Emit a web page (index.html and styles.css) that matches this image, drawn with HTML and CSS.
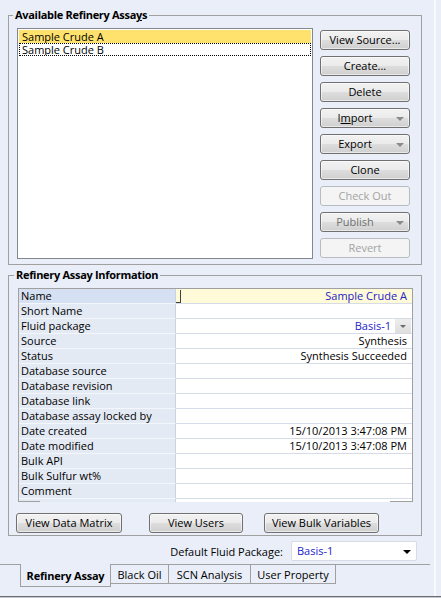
FILE: index.html
```html
<!DOCTYPE html>
<html>
<head>
<meta charset="utf-8">
<title>Refinery Assay</title>
<link rel="stylesheet" href="styles.css">
</head>
<body>
<div class="app">
  <div class="top">
    <div class="main">
      <fieldset class="group group-assays">
        <legend>Available Refinery Assa<u>y</u>s</legend>
        <div class="assay-body">
          <div class="listbox">
            <div class="item selected"><span class="item-text">Sample Crude A</span></div>
            <div class="item focused"><span class="item-text">Sample Crude B</span></div>
          </div>
          <div class="btn-col">
            <button class="btn">View Source...</button>
            <button class="btn">Create...</button>
            <button class="btn">Delete</button>
            <button class="btn btn-drop">I<u>m</u>port<span class="drop-arrow"></span></button>
            <button class="btn btn-drop">Export<span class="drop-arrow"></span></button>
            <button class="btn">Clone</button>
            <button class="btn disabled">Check Out</button>
            <button class="btn btn-drop dim">Publish<span class="drop-arrow"></span></button>
            <button class="btn disabled">Revert</button>
          </div>
        </div>
      </fieldset>

      <fieldset class="group group-info">
        <legend>Refinery Assay Information</legend>
        <div class="grid">
          <div class="lbl current">Name</div><div class="val name-val">Sample Crude A</div>
          <div class="lbl">Short Name</div><div class="val"></div>
          <div class="lbl">Fluid package</div><div class="val fluid-val"><span class="blue">Basis-1</span><span class="cell-drop"></span></div>
          <div class="lbl">Source</div><div class="val">Synthesis</div>
          <div class="lbl">Status</div><div class="val">Synthesis Succeeded</div>
          <div class="lbl">Database source</div><div class="val"></div>
          <div class="lbl">Database revision</div><div class="val"></div>
          <div class="lbl">Database link</div><div class="val"></div>
          <div class="lbl">Database assay locked by</div><div class="val"></div>
          <div class="lbl">Date created</div><div class="val">15/10/2013 3:47:08 PM</div>
          <div class="lbl">Date modified</div><div class="val">15/10/2013 3:47:08 PM</div>
          <div class="lbl">Bulk API</div><div class="val"></div>
          <div class="lbl">Bulk Sulfur wt%</div><div class="val"></div>
          <div class="lbl">Comment</div><div class="val"></div>
        </div>
        <div class="info-buttons">
          <button class="btn btn-matrix">View Data Matrix</button>
          <button class="btn btn-users">View Users</button>
          <button class="btn btn-bulk">View Bulk Variables</button>
        </div>
      </fieldset>

      <div class="default-row">
        <span class="default-label">Default Fluid Package:</span>
        <div class="combo"><span class="combo-text">Basis-1</span><span class="combo-arrow"></span></div>
      </div>

      <div class="tabs">
        <div class="tab-lead"></div>
        <div class="tab active">Refinery Assay</div>
        <div class="tab tab-black">Black Oil</div>
        <div class="tab tab-scn">SCN Analysis</div>
        <div class="tab tab-user">User Property</div>
        <div class="tab-fill"></div>
      </div>
    </div>
    <div class="splitter"></div>
  </div>
  <div class="bottom-line"></div>
  <div class="bottom-rest"></div>
</div>
</body>
</html>
```

FILE: styles.css
```css
* { box-sizing: border-box; }
html, body { margin: 0; padding: 0; }
body {
  width: 441px;
  height: 598px;
  overflow: hidden;
  background: #e9eef8;
  font-family: "Open Sans", "Noto Sans", sans-serif;
  font-size: 11px;
  color: #000;
}
.app { display: flex; flex-direction: column; height: 598px; }
.top { display: flex; height: 596px; }
.main { width: 434px; display: flex; flex-direction: column; }
.splitter { width: 2px; background: #f8fafd; }
.bottom-line { height: 1px; background: #6e6e6e; }
.bottom-rest { height: 1px; background: #c3c9d3; }

/* group boxes */
.group {
  margin: 0 0 0 8px;
  width: 414px;
  min-width: 0;
  border: 1px solid #a0a0a0;
}
.group legend {
  font-weight: bold;
  line-height: 14px;
  height: 14px;
  padding: 0 2px;
  margin-left: -4px;
  letter-spacing: -0.3px;
  color: #000;
}
.group-assays { margin-top: 8px; padding: 6px 11px 5px 8px; }
.assay-body { display: flex; gap: 7px; }

.listbox {
  width: 296px;
  height: 231px;
  background: #fff;
  border: 1px solid #828790;
  padding: 1px;
}
.item { height: 13px; padding-left: 3px; white-space: nowrap; overflow: hidden; }
.item-text { display: block; font-size: 11px; line-height: 13px; height: 13px; }
.item.selected { background: #ffe26e; }
.item.focused { border: 1px dotted #000; padding-left: 2px; }
.item.focused .item-text { line-height: 11px; height: 11px; }

.btn-col { display: flex; flex-direction: column; gap: 6px; margin-top: 2px; width: 90px; }

/* buttons */
.btn {
  position: relative;
  height: 20px;
  padding: 0;
  margin: 0;
  font-family: inherit;
  font-size: 11px;
  line-height: 18px;
  color: #000;
  border: 1px solid #707070;
  border-radius: 3px;
  background: linear-gradient(#f2f2f2 0%, #ebebeb 48%, #dddddd 52%, #cfcfcf 100%);
  box-shadow: inset 0 0 0 1px rgba(255,255,255,0.55);
  text-align: center;
  white-space: nowrap;
}
.btn-col .btn { width: 90px; }
.btn-drop { padding-right: 20px; }
.drop-arrow {
  position: absolute;
  right: 5px;
  top: 8px;
  width: 0;
  height: 0;
  border-left: 4px solid transparent;
  border-right: 4px solid transparent;
  border-top: 4px solid #8a8a8a;
}
.btn.dim { color: #6f6f6f; }
.btn.disabled {
  color: #a3a3a3;
  border-color: #b8bcc2;
  background: #f4f4f4;
  box-shadow: none;
}

/* info group */
.group-info { margin-top: 3px; padding: 6px 8px 2px 9px; }
.grid {
  position: relative;
  width: 395px;
  height: 214px;
  border: 1px solid #a0a0a0;
  border-bottom: none;
  display: grid;
  grid-template-columns: 157px 236px;
  grid-template-rows: repeat(14, 15px);
  align-content: start;
  background: linear-gradient(to right, #e4eaf4 156px, #c9d3e3 156px, #c9d3e3 157px, #fff 157px);
}
.grid::before, .grid::after {
  content: "";
  position: absolute;
  bottom: 0;
  height: 1px;
  background: #a0a0a0;
}
.grid::before { left: -1px; width: 22px; }
.grid::after { right: -1px; width: 23px; }
.lbl {
  height: 15px;
  line-height: 14px;
  padding-left: 2px;
  background: #e4eaf4;
  border-bottom: 1px solid #f3f6fa;
  border-right: 1px solid #c9d3e3;
  white-space: nowrap;
}
.lbl.current { background: #d5e1f3; }
.val {
  position: relative;
  height: 15px;
  line-height: 14px;
  padding-right: 5px;
  text-align: right;
  background: #fff;
  border-bottom: 1px solid #d5dce8;
  white-space: nowrap;
}
.name-val { background: #fffad8; color: #2323c8; }
.name-val::before {
  content: "";
  position: absolute;
  left: 0;
  top: 1px;
  width: 4px;
  height: 12px;
  border-right: 1px solid #404040;
  border-bottom: 1px solid #404040;
}
.fluid-val { padding-right: 21px; }
.blue { color: #2323c8; }
.cell-drop {
  position: absolute;
  right: 1px;
  top: 0;
  width: 16px;
  height: 14px;
  background: linear-gradient(#eeeeee, #dedede);
}
.cell-drop::after {
  content: "";
  position: absolute;
  left: 5px;
  top: 6px;
  border-left: 3px solid transparent;
  border-right: 3px solid transparent;
  border-top: 3px solid #6a6a6a;
}

.info-buttons { display: flex; margin-top: 11px; margin-left: -2px; }
.btn-matrix { width: 106px; }
.btn-users { width: 94px; margin-left: 27px; }
.btn-bulk { width: 115px; margin-left: 21px; }

/* default fluid package */
.default-row {
  display: flex;
  align-items: center;
  justify-content: flex-end;
  gap: 8px;
  margin-top: 5px;
  padding-right: 17px;
  height: 20px;
}
.combo {
  position: relative;
  width: 126px;
  height: 20px;
  background: #fff;
  border: 1px solid #d6dbe4;
  border-radius: 2px;
  line-height: 18px;
  padding-left: 5px;
}
.combo-text { color: #2323c8; }
.combo-arrow {
  position: absolute;
  right: 5px;
  top: 8px;
  border-left: 4px solid transparent;
  border-right: 4px solid transparent;
  border-top: 4px solid #000;
}

/* tabs */
.tabs { display: flex; align-items: flex-start; margin-top: 3px; margin-right: 4px; height: 23px; }
.tab-lead { width: 20px; height: 1px; border-top: 1px solid #a0a0a0; }
.tab {
  height: 20px;
  line-height: 19px;
  border-top: 1px solid #a0a0a0;
  border-right: 1px solid #a0a0a0;
  border-bottom: 1px solid #a0a0a0;
  text-align: center;
  white-space: nowrap;
}
.tab.active {
  width: 91px;
  height: 23px;
  line-height: 23px;
  border-top: none;
  border-left: 1px solid #a0a0a0;
  font-weight: bold;
  letter-spacing: -0.2px;
}
.tab-black { width: 58px; }
.tab-scn { width: 82px; }
.tab-user { width: 85px; }
.tab-fill { flex: 1; height: 1px; border-top: 1px solid #a0a0a0; }
```
